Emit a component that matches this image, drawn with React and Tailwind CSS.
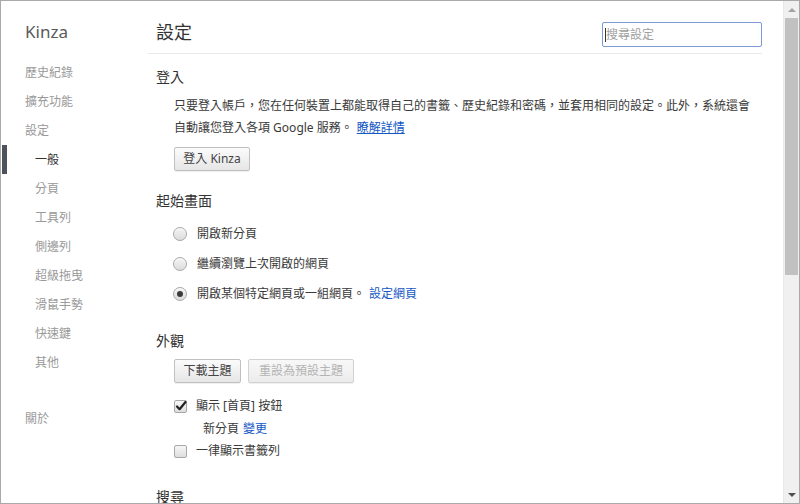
import React from 'react';

const navItems = [
  { label: '歷史紀錄', sub: false },
  { label: '擴充功能', sub: false },
  { label: '設定', sub: false },
  { label: '一般', sub: true, active: true },
  { label: '分頁', sub: true },
  { label: '工具列', sub: true },
  { label: '側邊列', sub: true },
  { label: '超級拖曳', sub: true },
  { label: '滑鼠手勢', sub: true },
  { label: '快速鍵', sub: true },
  { label: '其他', sub: true },
];

function Radio({ checked }) {
  return (
    <span className="relative w-[14px] h-[14px] rounded-full border border-[#a8a8a8] bg-gradient-to-b from-[#f4f4f4] to-[#dcdcdc] shadow-[inset_0_1px_1px_rgba(255,255,255,0.8)] flex items-center justify-center shrink-0">
      {checked && <span className="w-[6px] h-[6px] rounded-full bg-[#3a3a3a]" />}
    </span>
  );
}

function Checkbox({ checked }) {
  return (
    <span className="relative w-[13px] h-[13px] rounded-[2px] border border-[#a8a8a8] bg-gradient-to-b from-[#f6f6f6] to-[#dedede] flex items-center justify-center shrink-0">
      {checked && (
        <svg width="12" height="12" viewBox="0 0 12 12" className="absolute -top-[1px] left-[0px]">
          <path d="M2 6.5 L4.6 9.2 L10.5 2" fill="none" stroke="#222" strokeWidth="2.2" strokeLinecap="round" strokeLinejoin="round" />
        </svg>
      )}
    </span>
  );
}

function Button({ children, disabled, className = '' }) {
  return (
    <button
      className={
        'h-[24px] rounded-[2px] border bg-gradient-to-b shadow-[0_1px_0_rgba(0,0,0,0.06)] text-[12px] leading-[22px] whitespace-nowrap text-center ' +
        (disabled
          ? 'text-[#b4b4b4] border-[#d2d2d2] from-[#f8f8f8] to-[#ececec] '
          : 'text-[#444] border-[#c0c0c0] from-[#fbfbfb] to-[#e6e6e6] ') +
        className
      }
    >
      {children}
    </button>
  );
}

function Heading({ children, className = '' }) {
  return <h3 className={'text-[14px] leading-[20px] text-[#333] ' + className}>{children}</h3>;
}

export default function App() {
  return (
    <div
      className="w-[800px] h-[504px] border border-[#a9a9a9] bg-white flex overflow-hidden"
      style={{ fontFamily: '"Noto Sans", "Noto Sans CJK TC", sans-serif' }}
    >
      {/* Sidebar */}
      <div className="w-[147px] shrink-0 pt-[19px]">
        <div className="pl-[24px] text-[17px] leading-[24px] text-[#5a5a5a]">Kinza</div>
        <ul className="mt-[14px]">
          {navItems.map((item) => (
            <li
              key={item.label}
              className={
                'relative h-[29px] leading-[29px] text-[12px] ' +
                (item.sub ? 'pl-[34px] ' : 'pl-[24px] ') +
                (item.active ? 'text-[#333]' : 'text-[#999]')
              }
            >
              {item.active && <span className="absolute left-[1px] top-0 w-[5px] h-[29px] bg-[#4d535a]" />}
              {item.label}
            </li>
          ))}
          <li className="mt-[27px] h-[29px] leading-[29px] text-[12px] pl-[24px] text-[#999]">關於</li>
        </ul>
      </div>

      {/* Main */}
      <div className="w-[614px] shrink-0">
        <div className="h-[53px] border-b border-[#eaeaea] flex justify-between items-start">
          <h1 className="pl-[8px] pt-[19px] text-[18px] leading-[24px] text-[#333]">設定</h1>
          <div className="mt-[21px] w-[160px] h-[25px] rounded-[2px] border border-[#7b9ad6] flex items-center pl-[2px]">
            <span className="w-[1px] h-[14px] bg-[#333]" />
            <span className="text-[12px] text-[#a0a0a0]">搜尋設定</span>
          </div>
        </div>

        <div className="pl-[8px]">
          <Heading className="mt-[13px]">登入</Heading>
          <div className="pl-[18px] mt-[8px]">
            <p className="w-[578px] text-[12px] leading-[22px] text-[#3a3a3a]">
              只要登入帳戶，您在任何裝置上都能取得自己的書籤、歷史紀錄和密碼，並套用相同的設定。此外，系統還會自動讓您登入各項 Google 服務。
              <a className="ml-[4px] text-[#1558c4] underline">瞭解詳情</a>
            </p>
            <Button className="mt-[8px] w-[76px]">登入 Kinza</Button>
          </div>

          <Heading className="mt-[20px]">起始畫面</Heading>
          <div className="pl-[17px] mt-[8px]">
            {[
              { t: '開啟新分頁' },
              { t: '繼續瀏覽上次開啟的網頁' },
              { t: '開啟某個特定網頁或一組網頁。', c: true, link: '設定網頁' },
            ].map((r) => (
              <div key={r.t} className="h-[30px] flex items-center gap-[10px] text-[12px] text-[#3a3a3a]">
                <Radio checked={r.c} />
                <span>
                  {r.t}
                  {r.link && <a className="ml-[4px] text-[#1558c4]">{r.link}</a>}
                </span>
              </div>
            ))}
          </div>

          <Heading className="mt-[22px]">外觀</Heading>
          <div className="pl-[18px] mt-[8px] flex gap-[7px]">
            <Button className="w-[67px]">下載主題</Button>
            <Button disabled className="w-[106px]">重設為預設主題</Button>
          </div>
          <div className="pl-[18px] mt-[12px] text-[12px] text-[#3a3a3a]">
            <div className="h-[22px] flex items-center gap-[9px]">
              <Checkbox checked />
              <span>顯示 [首頁] 按鈕</span>
            </div>
            <div className="h-[23px] flex items-center pl-[29px]">
              新分頁 <a className="ml-[4px] text-[#1558c4]">變更</a>
            </div>
            <div className="h-[22px] flex items-center gap-[9px]">
              <Checkbox />
              <span>一律顯示書籤列</span>
            </div>
          </div>

          <Heading className="mt-[25px]">搜尋</Heading>
        </div>
      </div>

      <div className="flex-1" />

      {/* Scrollbar */}
      <div className="w-[16px] shrink-0 bg-[#f0f0f0] border-l border-[#e8e8e8] flex flex-col items-center">
        <div className="h-[17px] flex items-center justify-center">
          <span className="w-0 h-0 border-l-[4px] border-r-[4px] border-b-[4px] border-l-transparent border-r-transparent border-b-[#a3a3a3]" />
        </div>
        <div className="w-[13px] h-[257px] bg-[#c1c1c1]" />
        <div className="flex-1" />
        <div className="h-[17px] flex items-center justify-center">
          <span className="w-0 h-0 border-l-[4px] border-r-[4px] border-t-[4px] border-l-transparent border-r-transparent border-t-[#505050]" />
        </div>
      </div>
    </div>
  );
}
